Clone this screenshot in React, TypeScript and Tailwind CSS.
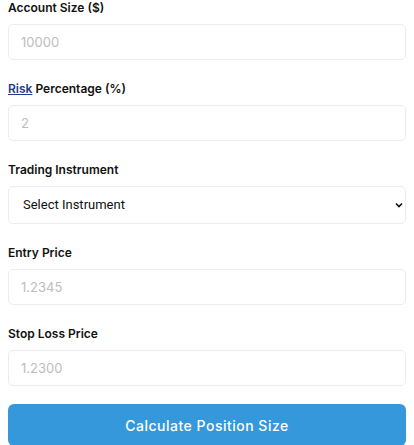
export default function App() {
  const fields = [
    { label: "Account Size ($)", placeholder: "10000" },
    { label: "Risk Percentage (%)", placeholder: "2", link: true },
  ];
  const prices = [
    { label: "Entry Price", placeholder: "1.2345", gap: "mb-[21px]" },
    { label: "Stop Loss Price", placeholder: "1.2300", gap: "mb-[18px]" },
  ];

  const labelCls = "block text-[12px] leading-4 font-semibold text-[#111] mb-2";
  const inputCls =
    "w-full h-9 rounded-[5px] border border-[#ececec] bg-white px-3 text-[13px] text-[#222] placeholder:text-[#bdbdbd] outline-none";

  return (
    <div className="bg-white min-h-screen px-2 font-['Inter',sans-serif]">
      {fields.map((f) => (
        <div key={f.label} className="mb-[21px]">
          <label className={labelCls}>
            {f.link ? (
              <>
                <a href="#" className="text-[#1f3b8c] underline">
                  Risk
                </a>{" "}
                Percentage (%)
              </>
            ) : (
              f.label
            )}
          </label>
          <input type="text" placeholder={f.placeholder} className={inputCls} />
        </div>
      ))}

      <div className="mb-[21px]">
        <label className={labelCls}>Trading Instrument</label>
        <div className="relative">
          <select className="w-full h-[38px] appearance-none rounded-[5px] border border-[#ececec] bg-white pl-[14px] pr-8 text-[13px] text-[#111] font-['Roboto',sans-serif] outline-none">
            <option>Select Instrument</option>
            <option>EUR/USD</option>
            <option>GBP/USD</option>
            <option>USD/JPY</option>
          </select>
          <svg
            className="pointer-events-none absolute right-[2px] top-1/2 -translate-y-1/2"
            width="10"
            height="10"
            viewBox="0 0 10 10"
          >
            <path d="M2 3.5 L5 6.5 L8 3.5" fill="none" stroke="#111" strokeWidth="1.6" />
          </svg>
        </div>
      </div>

      {prices.map((f) => (
        <div key={f.label} className={f.gap}>
          <label className={labelCls}>{f.label}</label>
          <input type="text" placeholder={f.placeholder} className={inputCls} />
        </div>
      ))}

      <button className="w-full h-[42px] rounded-[6px] bg-[#3498db] text-white text-[14px] font-medium tracking-[0.5px]">
        Calculate Position Size
      </button>
    </div>
  );
}
